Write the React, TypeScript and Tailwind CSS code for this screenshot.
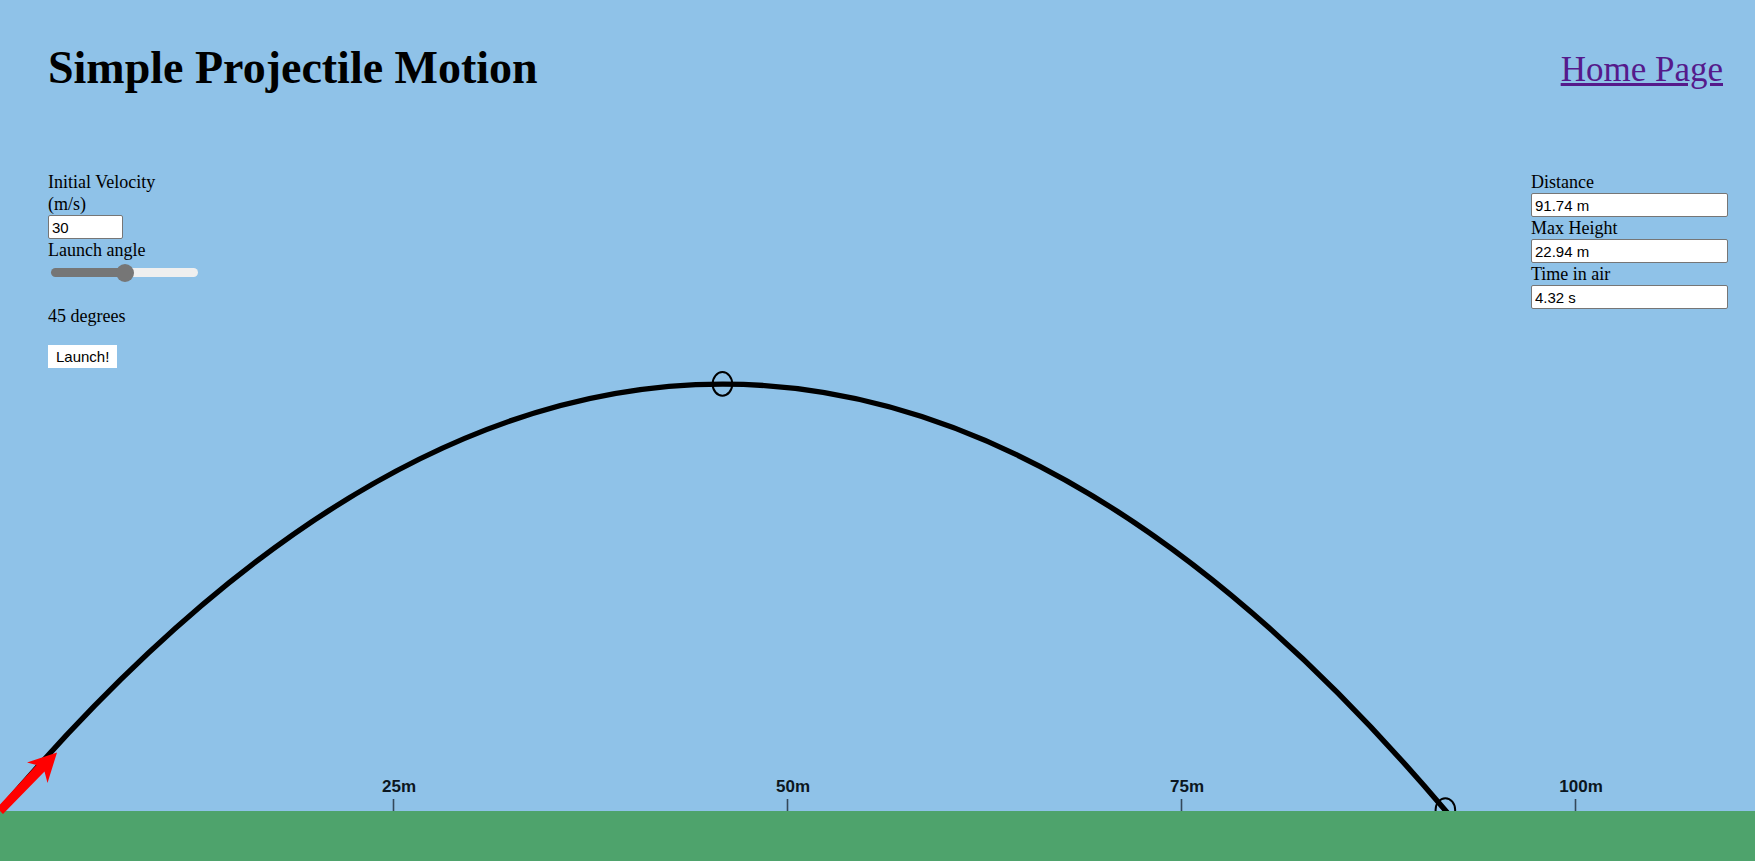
import { useState } from "react";

const GRAVITY = 9.81;
const VIEW_WIDTH = 1755;
const VIEW_HEIGHT = 811;
const X_SCALE = 15.76;
const Y_SCALE = 18.6;
const MARKS = [25, 50, 75, 100];

function solve(velocity: number, degrees: number) {
  const angle = (degrees * Math.PI) / 180;
  return {
    distance: (velocity ** 2 * Math.sin(2 * angle)) / GRAVITY,
    height: (velocity * Math.sin(angle)) ** 2 / (2 * GRAVITY),
    time: (2 * velocity * Math.sin(angle)) / GRAVITY,
  };
}

function Result({ id, label, value }: { id: string; label: string; value: string }) {
  return (
    <div>
      <label htmlFor={id} className="block">
        {label}
      </label>
      <input
        id={id}
        readOnly
        value={value}
        className="block h-6 w-full rounded-[2px] border border-[#767676] bg-white px-[3px] font-['Liberation_Sans',sans-serif] text-[15px] text-black"
      />
    </div>
  );
}

function Scene({ distance, height, degrees }: { distance: number; height: number; degrees: number }) {
  const landing = distance * X_SCALE;
  const peakX = landing / 2;
  const peakY = VIEW_HEIGHT - height * Y_SCALE;
  const controlY = 2 * peakY - VIEW_HEIGHT;

  return (
    <div className="absolute inset-x-0 top-0 bottom-[50px]">
      <svg
        viewBox={`0 0 ${VIEW_WIDTH} ${VIEW_HEIGHT}`}
        preserveAspectRatio="none"
        className="block h-full w-full overflow-visible"
        aria-hidden="true"
      >
        <defs>
          <clipPath id="sky">
            <rect width={VIEW_WIDTH} height={VIEW_HEIGHT} />
          </clipPath>
        </defs>
        <g clipPath="url(#sky)" fill="none" stroke="#000">
          <path d={`M0 ${VIEW_HEIGHT - 1} Q${peakX} ${controlY} ${landing} ${VIEW_HEIGHT} l6 7`} strokeWidth="5.4" />
          <ellipse cx={peakX - 0.5} cy={peakY - 0.5} rx="9.8" ry="11.8" strokeWidth="2" />
          <ellipse cx={landing - 0.5} cy={VIEW_HEIGHT - 1} rx="9.8" ry="11.8" strokeWidth="2" />
          {MARKS.map((m) => (
            <path key={m} d={`M${m * X_SCALE - 0.5} 799V811`} stroke="#34485a" strokeWidth="1.6" />
          ))}
        </g>
        <path
          transform={`rotate(${45 - degrees} 0 ${VIEW_HEIGHT})`}
          d="M-1 805.5L36.5 765L27 762.5L57 752.5L47.5 783L44.5 771.5L3 814L-1 810Z"
          fill="#f00"
        />
      </svg>
      {MARKS.map((m) => (
        <span
          key={m}
          style={{ left: `${((m * X_SCALE) / VIEW_WIDTH) * 100}%` }}
          className="absolute bottom-3 -translate-x-1/2 pl-2.5 font-['Liberation_Sans',sans-serif] text-[17px] leading-6 font-bold text-[#0b1620]"
        >
          {m}m
        </span>
      ))}
    </div>
  );
}

export default function App() {
  const [velocity, setVelocity] = useState("30");
  const [degrees, setDegrees] = useState(45);
  const [shot, setShot] = useState(solve(30, 45));
  const [shotAngle, setShotAngle] = useState(45);
  const fill = (degrees / 90) * 100;

  const launch = () => {
    setShot(solve(Number(velocity) || 0, degrees));
    setShotAngle(degrees);
  };

  return (
    <div className="relative flex min-h-screen flex-col bg-[#8fc2e8] font-['Liberation_Serif',serif] text-lg leading-[22px] text-black">
      <Scene distance={shot.distance} height={shot.height} degrees={shotAngle} />

      <header className="relative flex h-[171px] items-start justify-between pt-[41px] pr-8 pl-12">
        <h1 className="text-[46px] leading-[54px] font-bold">Simple Projectile Motion</h1>
        <a href="#home" className="pt-[9px] text-[35px] leading-10 text-[#551a8b] underline">
          Home Page
        </a>
      </header>

      <main className="relative flex grow items-start justify-between pr-[27px] pl-12">
        <form
          className="w-[152px]"
          onSubmit={(e) => {
            e.preventDefault();
            launch();
          }}
        >
          <label htmlFor="velocity" className="block w-32">
            Initial Velocity (m/s)
          </label>
          <input
            id="velocity"
            value={velocity}
            onChange={(e) => setVelocity(e.target.value)}
            className="block h-6 w-[75px] rounded-[2px] border border-[#767676] bg-white px-[3px] font-['Liberation_Sans',sans-serif] text-[15px] text-black"
          />
          <label htmlFor="angle" className="block">
            Launch angle
          </label>
          <input
            id="angle"
            type="range"
            min={0}
            max={90}
            value={degrees}
            onChange={(e) => setDegrees(Number(e.target.value))}
            style={{ backgroundImage: `linear-gradient(to right, #767676 ${fill}%, #efefef ${fill}%)` }}
            className="mx-[3px] mt-[7px] mb-7 block h-[9px] w-[147px] appearance-none rounded-full [&::-webkit-slider-thumb]:size-[18px] [&::-webkit-slider-thumb]:appearance-none [&::-webkit-slider-thumb]:rounded-full [&::-webkit-slider-thumb]:bg-[#767676]"
          />
          <output htmlFor="angle" className="block">
            {degrees} degrees
          </output>
          <button
            type="submit"
            className="mt-[18px] block h-[23px] bg-white px-2 font-['Liberation_Sans',sans-serif] text-[15px] leading-[23px] text-black"
          >
            Launch!
          </button>
        </form>

        <section className="w-[197px]">
          <Result id="distance" label="Distance" value={`${shot.distance.toFixed(2)} m`} />
          <Result id="height" label="Max Height" value={`${shot.height.toFixed(2)} m`} />
          <Result id="time" label="Time in air" value={`${shot.time.toFixed(2)} s`} />
        </section>
      </main>

      <footer className="h-[50px] bg-[#4ea36c]" />
    </div>
  );
}
